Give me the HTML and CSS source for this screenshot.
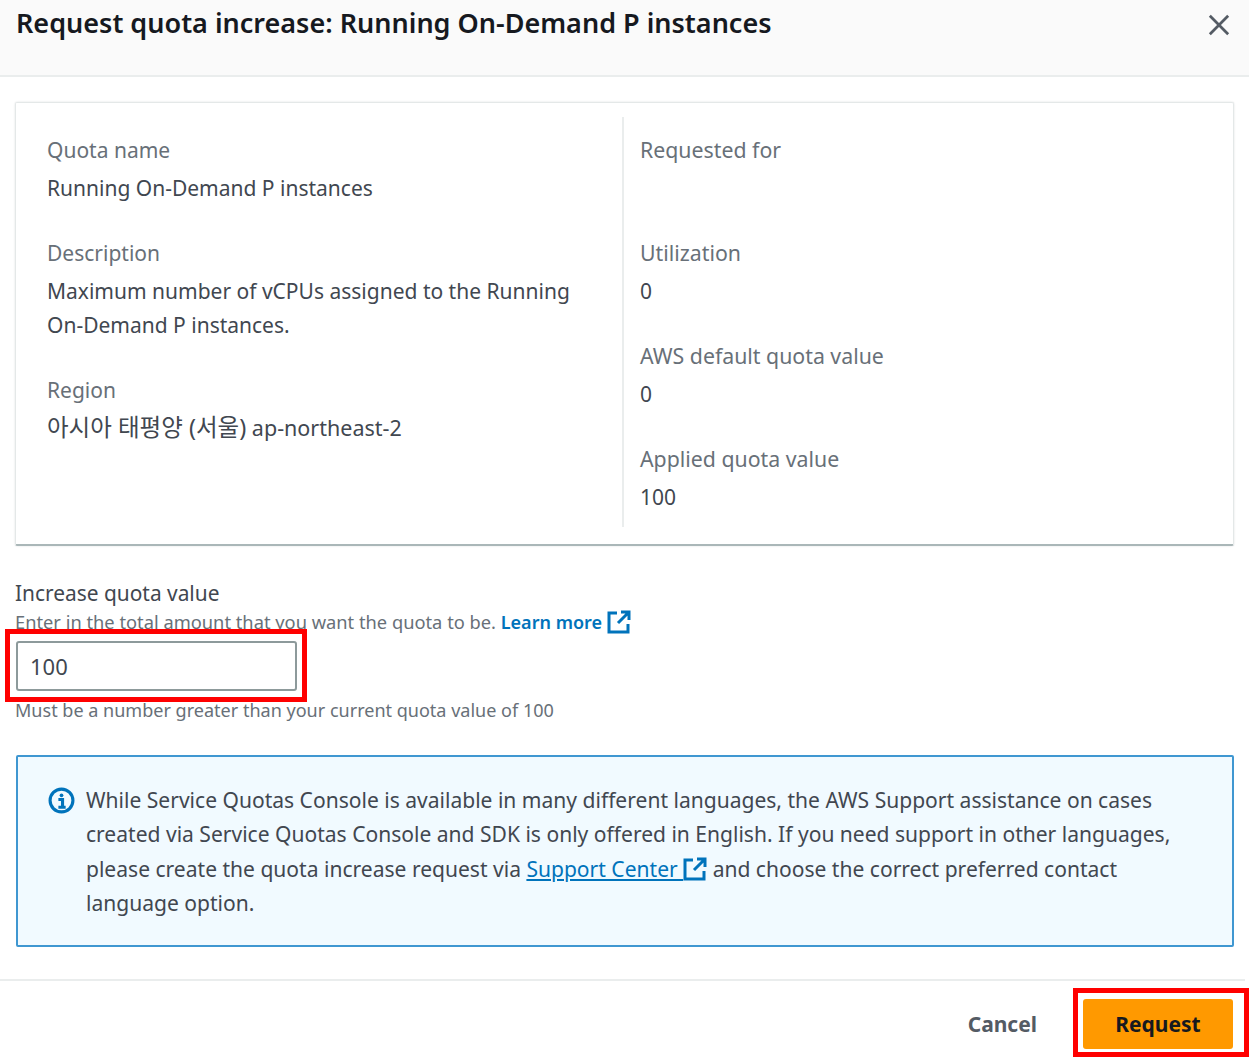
FILE: index.html
```html
<!DOCTYPE html>
<html lang="en">
<head>
<meta charset="utf-8">
<title>Request quota increase</title>
<link rel="stylesheet" href="styles.css">
</head>
<body>
<div class="modal">
  <header class="modal-header">
    <h1 class="modal-title">Request quota increase: Running On-Demand P instances</h1>
    <button class="close-btn" aria-label="Close">
      <svg class="close-icon" viewBox="0 0 24 24"><path d="M2 2 L22 22 M22 2 L2 22"/></svg>
    </button>
  </header>
  <main class="modal-body">
    <section class="card">
      <div class="col col-left">
        <div class="kv"><div class="label">Quota name</div><div class="value">Running On-Demand P instances</div></div>
        <div class="kv"><div class="label">Description</div><div class="value">Maximum number of vCPUs assigned to the Running On-Demand P instances.</div></div>
        <div class="kv"><div class="label">Region</div><div class="value region"><span class="ko" lang="ko">아시아 태평양 (서울)</span> ap-northeast-2</div></div>
      </div>
      <div class="col col-right">
        <div class="kv"><div class="label">Requested for</div><div class="value">&nbsp;</div></div>
        <div class="kv"><div class="label">Utilization</div><div class="value">0</div></div>
        <div class="kv"><div class="label">AWS default quota value</div><div class="value">0</div></div>
        <div class="kv"><div class="label">Applied quota value</div><div class="value">100</div></div>
      </div>
    </section>
    <section class="field">
      <div class="field-label">Increase quota value</div>
      <div class="field-desc">Enter in the total amount that you want the quota to be. <a class="learn" href="#">Learn more</a>
        <svg class="ext ext-lg" viewBox="0 0 24 24"><path d="M10 3 H2 V22 H21 V14"/><path d="M14 2 H22 V10 M22 2 L11 13"/></svg>
      </div>
      <div class="input-wrap">
        <div class="input">100</div>
        <div class="highlight"></div>
      </div>
      <div class="field-hint">Must be a number greater than your current quota value of 100</div>
    </section>
    <section class="alert">
      <svg class="info-icon" viewBox="0 0 26 26"><circle cx="13" cy="13" r="11"/><circle class="dot" cx="13" cy="8" r="1.8"/><path d="M10 12 H14 V19 M10 19.5 H17"/></svg>
      <p class="alert-text">While Service Quotas Console is available in many different languages, the AWS Support assistance on cases created via Service Quotas Console and SDK is only offered in English. If you need support in other languages, please create the quota increase request via <a class="support" href="#">Support Center <svg class="ext ext-sm" viewBox="0 0 24 24"><path d="M10 3 H2 V22 H21 V14"/><path d="M14 2 H22 V10 M22 2 L11 13"/></svg></a> and choose the correct preferred contact language option.</p>
    </section>
  </main>
  <footer class="modal-footer">
    <button class="btn-cancel">Cancel</button>
    <div class="request-wrap">
      <button class="btn-request">Request</button>
      <div class="highlight"></div>
    </div>
  </footer>
</div>
</body>
</html>
```
FILE: styles.css
```css
html, body { margin: 0; padding: 0; }
body {
  width: 1249px;
  height: 1057px;
  overflow: hidden;
  background: #fff;
  font-family: "Noto Sans", "Noto Sans CJK KR", sans-serif;
  color: #16191f;
}
.modal { display: flex; flex-direction: column; height: 1057px; }
.modal-header {
  height: 75px;
  box-sizing: content-box;
  background: #fafafa;
  border-bottom: 2px solid #eaeded;
  display: flex;
  justify-content: space-between;
  padding: 0 19px 0 16px;
}
.modal-title {
  margin: 6px 0 0;
  font-size: 27px;
  line-height: 34px;
  font-weight: 600;
  color: #16191f;
}
.close-btn { background: none; border: 0; padding: 0; margin: 0; height: 50px; display: flex; align-items: center; }
.close-icon { width: 22px; height: 22px; fill: none; stroke: #545b64; stroke-width: 3; }
.modal-body { flex: 1; padding: 25px 15px 0; }
.card {
  display: flex;
  height: 444px;
  box-sizing: border-box;
  border: 1px solid #e4e8e8;
  border-bottom: 2px solid #aab7b8;
  border-radius: 2px;
  padding: 14px 0 17px;
  box-shadow: 0 0 2px rgba(0, 28, 36, 0.15);
}
.col { box-sizing: border-box; padding-top: 16px; }
.col-left { width: 608px; padding-left: 31px; padding-right: 40px; border-right: 2px solid #eaeded; }
.col-right { flex: 1; padding-left: 16px; }
.kv { margin-bottom: 31px; }
.label { font-size: 21px; line-height: 34px; margin-bottom: 4px; color: #687078; }
.col-right .label { font-size: 21.3px; }
.value { font-size: 21px; line-height: 34px; color: #414750; }
.region { font-size: 21.5px; margin-top: -1px; }
.ko { font-size: 23.5px; }
.field { margin-top: 31px; }
.field-label { font-size: 20.9px; line-height: 32px; color: #414750; }
.field-desc { font-size: 18.3px; line-height: 26px; color: #687078; display: flex; align-items: center; white-space: pre-wrap; }
.learn { color: #0073bb; font-weight: 600; font-size: 18px; text-decoration: none; }
.ext { fill: none; stroke: #0073bb; stroke-width: 3; }
.ext-lg { width: 24px; height: 24px; margin-left: 5px; }
.ext-sm { width: 24px; height: 24px; vertical-align: -4px; }
.input-wrap { position: relative; width: 281px; margin: 6px 0 0 1px; }
.input {
  height: 50px;
  box-sizing: border-box;
  border: 2px solid #8d9a9b;
  border-radius: 3px;
  padding: 0 12px;
  font-size: 22px;
  line-height: 46px;
  color: #414750;
}
.input-wrap .highlight { inset: -12px -10px -11px -11px; }
.highlight { position: absolute; border: 5px solid #ff0000; pointer-events: none; }
.field-hint { margin-top: 6px; font-size: 18.05px; line-height: 26px; color: #687078; }
.alert {
  margin: 32px 0 0 1px;
  height: 192px;
  box-sizing: border-box;
  background: #f1faff;
  border: 2px solid #3f97d1;
  border-radius: 2px;
  padding: 26px 30px 0 30px;
  display: flex;
  gap: 11px;
}
.info-icon { width: 27px; height: 27px; flex: none; margin-top: 4px; fill: none; stroke: #0073bb; stroke-width: 3; }
.info-icon .dot { fill: #0073bb; stroke: none; }
.alert-text { margin: 0; font-size: 21.05px; line-height: 34.3px; color: #414750; }
.support { color: #0073bb; text-decoration: underline; }
.modal-footer {
  height: 78px;
  box-sizing: border-box;
  margin-right: 4px;
  border-top: 2px solid #eaeded;
  display: flex;
  justify-content: flex-end;
  align-items: center;
  gap: 46px;
  padding: 10px 12px 0 0;
}
.btn-cancel { background: none; border: 0; padding: 0; font: 700 21px "Noto Sans", sans-serif; color: #545b64; }
.request-wrap { position: relative; width: 150px; height: 50px; }
.btn-request {
  width: 150px;
  height: 50px;
  background: #ff9900;
  border: 0;
  border-radius: 3px;
  font: 700 21px "Noto Sans", sans-serif;
  color: #16191f;
}
.request-wrap .highlight { inset: -11px -16px -8px -10px; }
```
